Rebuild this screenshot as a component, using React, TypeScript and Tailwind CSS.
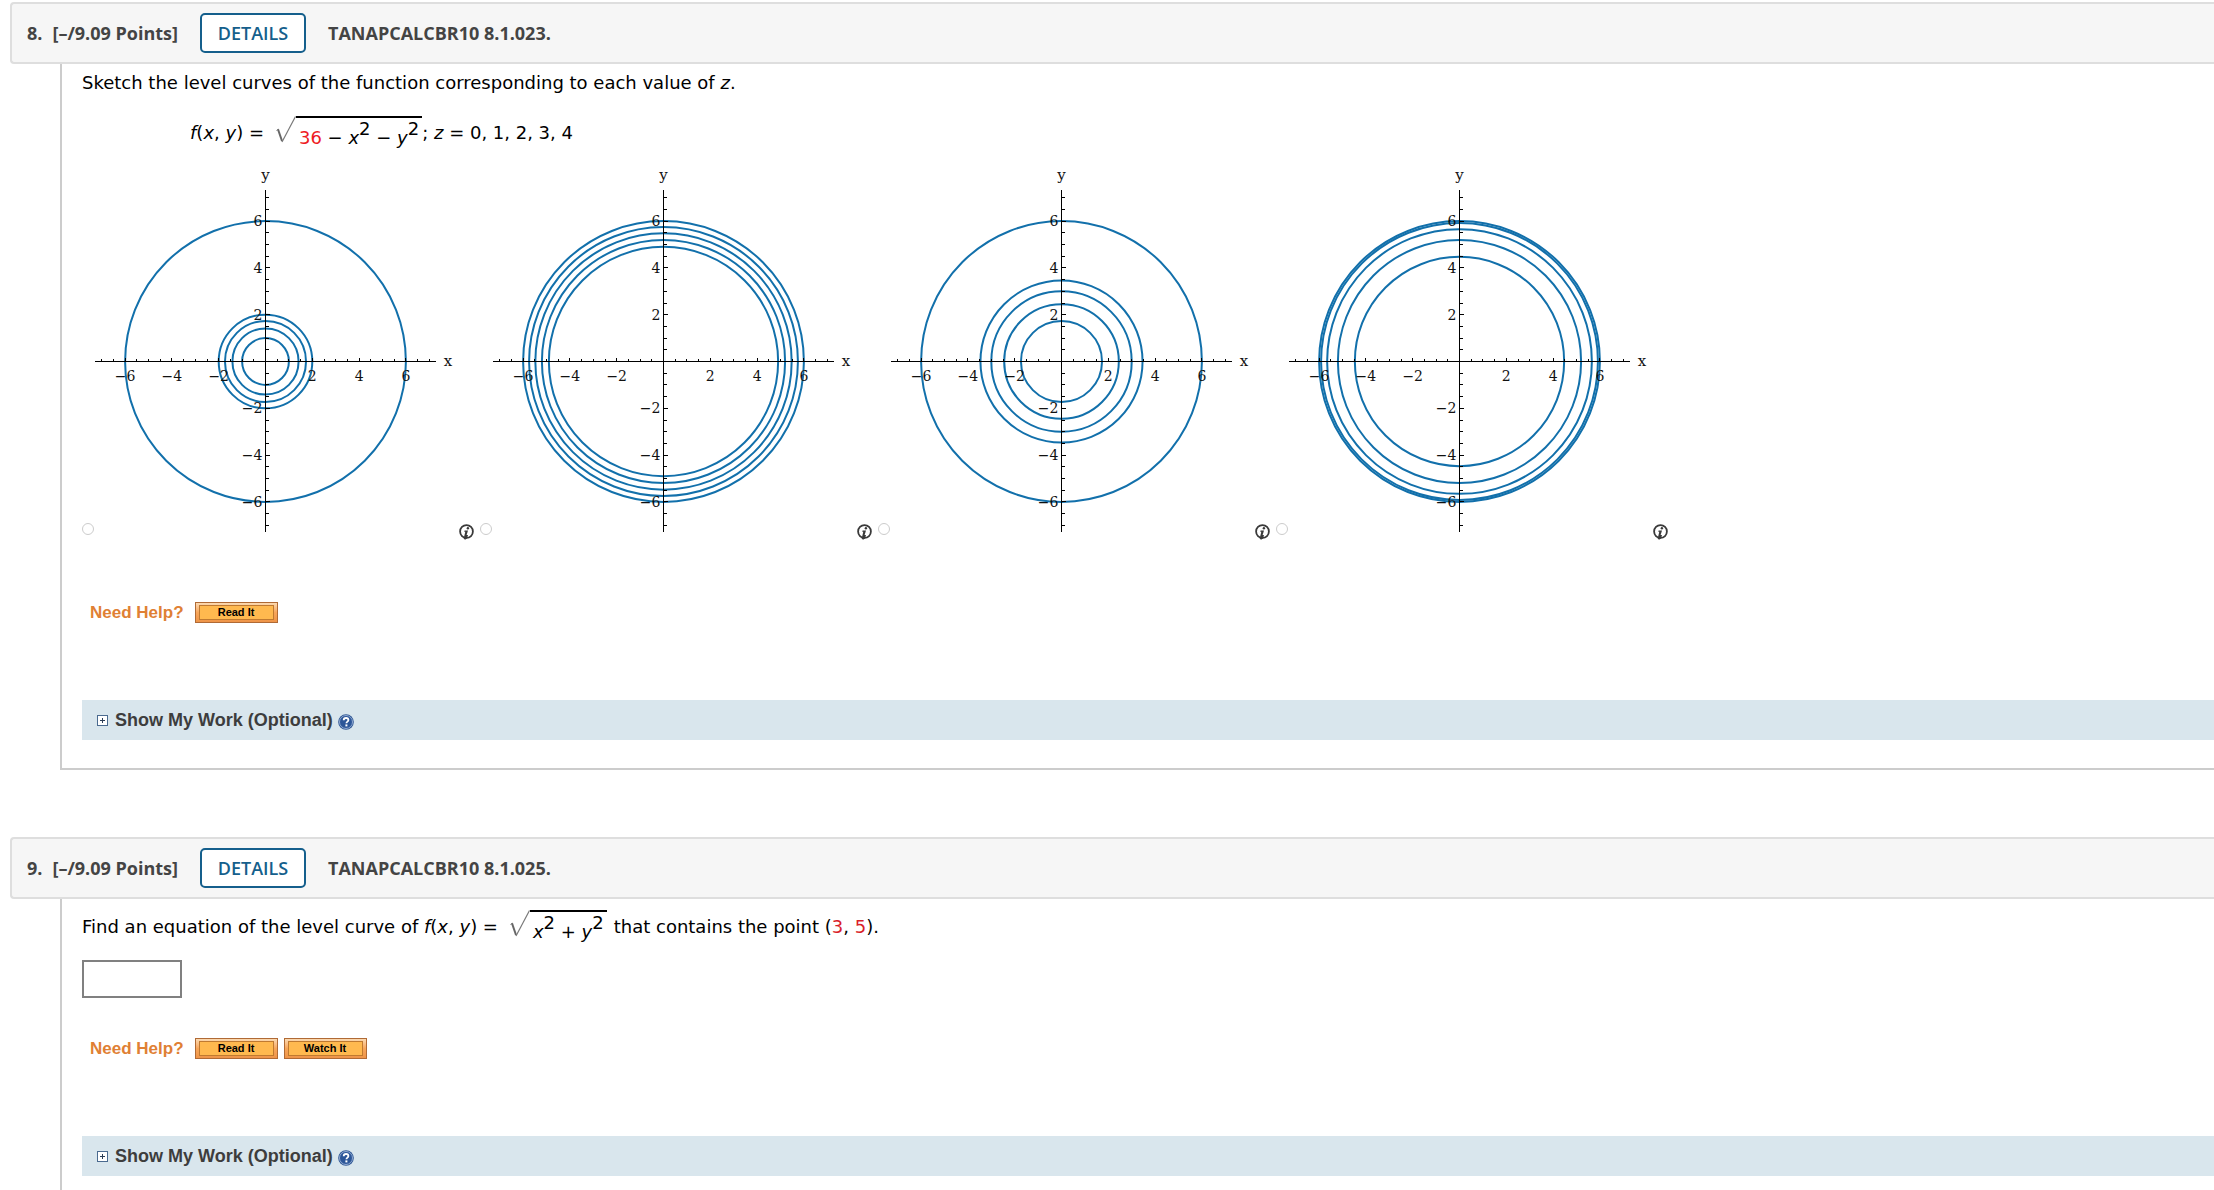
import { useState } from 'react';
import type { ReactNode } from 'react';

interface GraphOption {
  id: string;
  radii: number[];
}

const graphOptions: GraphOption[] = [
  { id: 'a', radii: [6, 2, Math.sqrt(3), Math.sqrt(2), 1] },
  { id: 'b', radii: [6, Math.sqrt(33), Math.sqrt(30), Math.sqrt(27), Math.sqrt(24)] },
  { id: 'c', radii: [6, Math.sqrt(12), 3, Math.sqrt(6), Math.sqrt(3)] },
  { id: 'd', radii: [6, Math.sqrt(35), Math.sqrt(32), Math.sqrt(27), Math.sqrt(20)] },
];

// Plot geometry: origin and pixels per unit
const CX = 171.5;
const CY = 201.5;
const UNIT = 23.4;

const ticks = Array.from({ length: 29 }, (_, i) => (i - 14) / 2).filter((t) => t !== 0);
const labels = [-6, -4, -2, 2, 4, 6];

const formatLabel = (n: number) => (n < 0 ? `−${-n}` : `${n}`);

function LevelCurves({ radii }: { radii: number[] }) {
  return (
    <svg width="365" height="380" viewBox="0 0 365 380" className="shrink-0" aria-hidden="true">
      <g fill="none" stroke="#1270ab" strokeWidth="2">
        {radii.map((r) => (
          <circle key={r} cx={CX} cy={CY} r={r * UNIT} />
        ))}
      </g>
      <g stroke="#000" strokeWidth="1" shapeRendering="crispEdges">
        <line x1="1" y1={CY} x2="342" y2={CY} />
        <line x1={CX} y1="30" x2={CX} y2="372" />
        {ticks.map((t) => {
          const len = t % 2 === 0 ? 4 : 3;
          return (
            <g key={t}>
              <line x1={CX + t * UNIT} y1={CY} x2={CX + t * UNIT} y2={CY - len} />
              <line x1={CX} y1={CY - t * UNIT} x2={CX + len} y2={CY - t * UNIT} />
            </g>
          );
        })}
      </g>
      <g fill="#111" fontFamily='"DejaVu Serif", serif' fontSize="14">
        {labels.map((n) => (
          <g key={n}>
            <text x={CX + n * UNIT} y="221" textAnchor="middle">{formatLabel(n)}</text>
            <text x={CX - 3} y={CY - n * UNIT + 5} textAnchor="end">{formatLabel(n)}</text>
          </g>
        ))}
        <text x={CX} y="20" textAnchor="middle" fontSize="15">y</text>
        <text x="354" y="206" textAnchor="middle" fontSize="15">x</text>
      </g>
    </svg>
  );
}

function InfoIcon() {
  return (
    <svg width="16" height="16" viewBox="0 0 16 16" aria-hidden="true">
      <circle cx="7.5" cy="7.5" r="6.4" fill="none" stroke="#3a3a3a" strokeWidth="1.8" />
      <circle cx="8.9" cy="4.2" r="1.2" fill="#3a3a3a" />
      <path d="M5.6 6.4h3.4L7.6 11h1.4L8 14.4l-2 1.4-1.3-1.4L6.3 7.8H5.2z" fill="#3a3a3a" />
    </svg>
  );
}

function HelpIcon() {
  return (
    <svg width="16" height="16" viewBox="0 0 16 16" aria-hidden="true">
      <circle cx="8" cy="8" r="7.8" fill="#2f5795" />
      <circle cx="8" cy="8" r="6.5" fill="#2c5698" stroke="#a9bfdf" strokeWidth="0.8" />
      <path d="M5.7 6.3c0-1.5 1-2.3 2.4-2.3s2.3.8 2.3 2c0 1.6-2 1.7-2 3.3" fill="none" stroke="#fff" strokeWidth="1.8" />
      <rect x="7.4" y="10.4" width="2" height="2" fill="#fff" />
    </svg>
  );
}

function ExpandIcon() {
  return (
    <svg width="11" height="11" viewBox="0 0 11 11" shapeRendering="crispEdges" aria-hidden="true">
      <rect x="0.5" y="0.5" width="10" height="10" fill="#fff" stroke="#4a6a8f" />
      <path d="M3 5.5h5M5.5 3v5" stroke="#2b3d55" />
    </svg>
  );
}

// Square root sign with a bar over its children
function Root({ children }: { children: ReactNode }) {
  return (
    <span className="flex items-start">
      <svg width="20" height="27" viewBox="0 0 20 27" className="shrink-0" aria-hidden="true">
        <path d="M0.5 14.5L2.5 13.2" stroke="#777" strokeWidth="1" fill="none" />
        <path d="M2 13.2L6 25" stroke="#666" strokeWidth="2" fill="none" />
        <path d="M6 26L19.5 0.5" stroke="#777" strokeWidth="1.2" fill="none" />
      </svg>
      <span className="border-t-2 border-black px-[3px] pt-[2px]">{children}</span>
    </span>
  );
}

function Squared({ children }: { children: ReactNode }) {
  return (
    <>
      <i>{children}</i>
      <sup className="static align-[9px] text-[18px] leading-none">2</sup>
    </>
  );
}

function HelpButton({ children }: { children: ReactNode }) {
  return (
    <button
      type="button"
      className="h-[21px] w-[83px] border border-[#b06a35] bg-linear-to-b from-[#fbd9b0] via-[#f7a65a] to-[#ee9448] px-[3px] py-[2px]"
    >
      <span className="flex h-full items-center justify-center border border-[#c07a30] bg-[#ffb94f] text-[11px] leading-none font-bold text-black">
        {children}
      </span>
    </button>
  );
}

function NeedHelp({ items }: { items: string[] }) {
  return (
    <div className="flex h-[21px] items-center pl-2 font-['Liberation_Sans',sans-serif]">
      <span className="mr-[11px] text-[17px] leading-none font-bold text-[#e08034]">Need Help?</span>
      <div className="flex gap-[6px]">
        {items.map((item) => (
          <HelpButton key={item}>{item}</HelpButton>
        ))}
      </div>
    </div>
  );
}

function ShowMyWork() {
  return (
    <div className="mt-[77px] flex h-10 items-center bg-[#d9e6ed] pl-[15px] font-['Liberation_Sans',sans-serif]">
      <button type="button" className="flex items-center gap-[7px] text-[18px] leading-[21px] font-bold text-[#3d3d3d]">
        <ExpandIcon />
        Show My Work (Optional)
      </button>
      <button type="button" aria-label="Help" className="ml-[5px] pt-1">
        <HelpIcon />
      </button>
    </div>
  );
}

interface QuestionProps {
  number: number;
  source: string;
  children: ReactNode;
}

function Question({ number, source, children }: QuestionProps) {
  return (
    <section>
      <header className="ml-[10px] flex h-[62px] items-center rounded-l-sm border-2 border-r-0 border-[#dedede] bg-[#f6f6f6] pl-[15px] font-['Open_Sans',sans-serif] text-[18px] leading-[22px] font-bold text-[#444]">
        <h2 className="flex gap-[10px]">
          <span>{number}.</span>
          <span>[–/9.09 Points]</span>
        </h2>
        <button
          type="button"
          className="mr-[22px] ml-[22px] h-10 w-[106px] rounded-[5px] border-2 border-[#155f8c] bg-white font-semibold text-[#155f8c]"
        >
          DETAILS
        </button>
        <span>{source}</span>
      </header>
      <div className="ml-[60px] border-b-2 border-l-2 border-[#ccc] pb-7 pl-5">{children}</div>
    </section>
  );
}

export default function App() {
  const [selected, setSelected] = useState<string | null>(null);
  const [answer, setAnswer] = useState('');

  return (
    <main className="flex h-screen flex-col gap-[67px] overflow-hidden bg-white pt-[2px] font-['DejaVu_Sans',sans-serif] text-[18px] leading-6 text-black">
      <Question number={8} source="TANAPCALCBR10 8.1.023.">
        <p className="pt-[7px]">
          Sketch the level curves of the function corresponding to each value of <i>z</i>.
        </p>
        <div className="mt-[21px] flex items-start pl-[108px] whitespace-pre">
          <span className="pt-[5px] pr-3"><i>f</i>(<i>x</i>, <i>y</i>) =</span>
          <Root>
            <span className="text-[#ee1b24]">36</span> − <Squared>x</Squared> − <Squared>y</Squared>
          </Root>
          <span className="pt-[5px]">; <i>z</i> = 0, 1, 2, 3, 4</span>
        </div>

        <div className="mt-[10px] flex gap-[5px]">
          {graphOptions.map((option) => (
            <div key={option.id} className="flex items-end">
              <input
                type="radio"
                name="level-curves"
                aria-label={`Graph ${option.id}`}
                checked={selected === option.id}
                onChange={() => setSelected(option.id)}
                className="mb-[5px] size-3 shrink-0 appearance-none rounded-full border border-[#ccc] bg-white checked:bg-[#155f8c]"
              />
              <LevelCurves radii={option.radii} />
              <button type="button" aria-label="Graph description">
                <InfoIcon />
              </button>
            </div>
          ))}
        </div>

        <div className="mt-[62px]">
          <NeedHelp items={['Read It']} />
        </div>
        <ShowMyWork />
      </Question>

      <Question number={9} source="TANAPCALCBR10 8.1.025.">
        <div className="flex items-start pt-[11px] whitespace-pre">
          <label htmlFor="answer" className="pt-[5px] pr-3">
            Find an equation of the level curve of <i>f</i>(<i>x</i>, <i>y</i>) =
          </label>
          <Root>
            <Squared>x</Squared> + <Squared>y</Squared>
          </Root>
          <span className="pt-[5px] pl-[7px]">
            that contains the point (<span className="text-[#d91e2a]">3</span>, <span className="text-[#d91e2a]">5</span>).
          </span>
        </div>
        <input
          id="answer"
          type="text"
          value={answer}
          onChange={(e) => setAnswer(e.target.value)}
          className="mt-4 block h-[38px] w-[100px] border-2 border-[#808080] bg-white px-1"
        />

        <div className="mt-10">
          <NeedHelp items={['Read It', 'Watch It']} />
        </div>
        <ShowMyWork />
      </Question>
    </main>
  );
}
